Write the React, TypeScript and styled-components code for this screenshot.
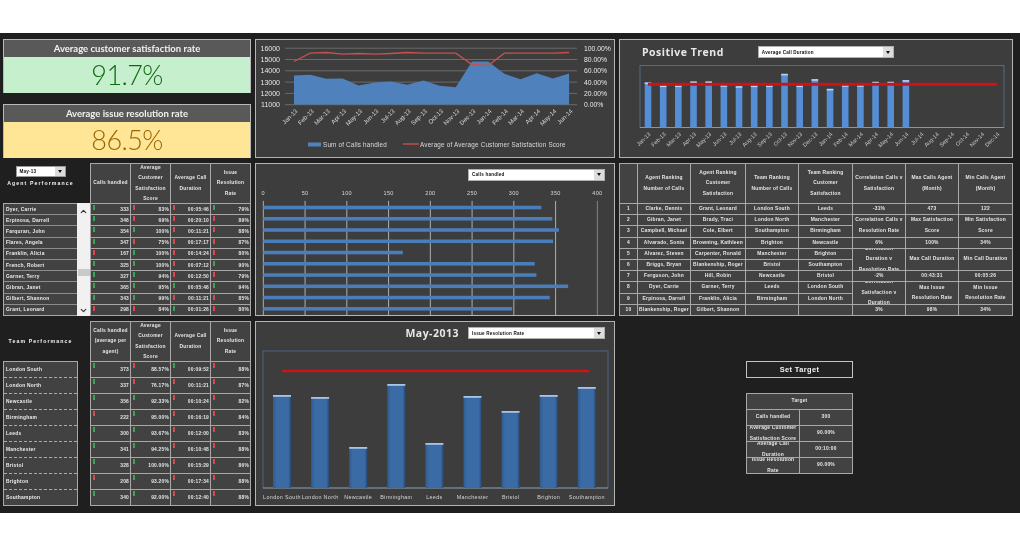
import styled, { createGlobalStyle } from "styled-components";
import { ChevronDown, ChevronUp } from "lucide-react";

const GlobalStyle = createGlobalStyle`
  html, body {
    margin: 0;
    padding: 0;
    background: #fff;
  }
  * {
    box-sizing: border-box;
  }
`;

const PANEL = "#3d3d3d";
const CELL = "#424242";
const LINE = "#a8a8a8";
const BLUE = "#4f81bd";
const MONTHS = ["Jan", "Feb", "Mar", "Apr", "May", "Jun", "Jul", "Aug", "Sep", "Oct", "Nov", "Dec"];

const Page = styled.div`
  width: 1020px;
  height: 544px;
  padding-top: 33px;
  background: #fff;
  overflow: hidden;
`;

const Dashboard = styled.main`
  height: 480px;
  padding: 6px 7px 0 3px;
  background: #1f1f1f;
  display: grid;
  grid-template-columns: 248px 360px 394px;
  grid-template-rows: 119px 153px 185px;
  column-gap: 4px;
  row-gap: 5px;
  filter: blur(0.3px);
  font-family: "Liberation Sans", Arial, sans-serif;
`;

const KpiStack = styled.section`
  display: flex;
  flex-direction: column;
  gap: 11px;
`;

const KpiCard = styled.div`
  flex: 1;
  display: flex;
  flex-direction: column;
  border: 1px solid #b8b8b8;
  border-bottom: none;
`;

const KpiTitle = styled.div`
  height: 17px;
  background: #595959;
  color: #f2f2f2;
  font: 700 9.5px/17px Lato, sans-serif;
  text-align: center;
`;

const KpiValue = styled.div<{ $bg: string; $fg: string }>`
  flex: 1;
  background: ${(p) => p.$bg};
  color: ${(p) => p.$fg};
  font: 300 27px/36px Lato, sans-serif;
  letter-spacing: -0.6px;
  text-align: center;
`;

const Panel = styled.section`
  background: ${PANEL};
  border: 1px solid #b4b4b4;
  display: flex;
  flex-direction: column;
  overflow: hidden;
`;

const Toolbar = styled.div<{ $height: number }>`
  height: ${(p) => p.$height}px;
  flex: none;
  display: flex;
  align-items: center;
  justify-content: flex-end;
  padding-right: 9px;
  gap: 9px;
`;

const TrendBar = styled(Toolbar)`
  justify-content: flex-start;
  padding: 3px 0 0 22px;
  gap: 34px;
`;

const ChartTitle = styled.h2`
  margin: 0;
  color: #e8e8e8;
  font: 700 10.5px "Open Sans", sans-serif;
  letter-spacing: 0.5px;
`;

const ChartSvg = styled.svg`
  display: block;
  flex: 1;
  min-height: 0;
  width: 100%;
  font-family: "Liberation Sans", Arial, sans-serif;
`;

const DropBox = styled.div<{ $width: number }>`
  width: ${(p) => p.$width}px;
  height: 12px;
  display: flex;
  align-items: center;
  background: #fff;
  border: 1px solid #b0b0b0;
  color: #111;
  font: 700 4.6px "Liberation Sans", sans-serif;
  letter-spacing: 0.2px;
  padding-left: 3px;
`;

const DropLabel = styled.span`
  flex: 1;
  white-space: nowrap;
`;

const DropArrow = styled.span`
  width: 10px;
  height: 100%;
  background: #dcdcdc;
  display: flex;
  align-items: center;
  justify-content: center;

  &::after {
    content: "";
    border-left: 2.5px solid transparent;
    border-right: 2.5px solid transparent;
    border-top: 3px solid #111;
  }
`;

function Dropdown({ label, width }: { label: string; width: number }) {
  return (
    <DropBox $width={width}>
      <DropLabel>{label}</DropLabel>
      <DropArrow />
    </DropBox>
  );
}

const TablePanel = styled.section`
  display: grid;
  grid-template-columns: 87px 161px;
`;

const SideColumn = styled.div`
  display: flex;
  flex-direction: column;
`;

const SideHead = styled.div`
  width: 75px;
  height: 40px;
  flex: none;
  display: flex;
  flex-direction: column;
  align-items: center;
  justify-content: flex-start;
  padding-top: 3px;
  gap: 3px;
`;

const TeamHead = styled(SideHead)`
  justify-content: center;
  padding-top: 0;
`;

const SideTitle = styled.h3`
  margin: 0;
  color: #f2f2f2;
  font: 700 5.2px "Liberation Sans", sans-serif;
  letter-spacing: 1.1px;
  white-space: nowrap;
`;

const MonthBox = styled(DropBox)`
  height: 11px;
  flex: none;
  border-color: #999;
`;

const ListRow = styled.div`
  flex: 1;
  display: flex;
  min-height: 0;
`;

const NameList = styled.div`
  width: 75px;
  display: flex;
  flex-direction: column;
  border: 1px solid ${LINE};
  background: ${CELL};
`;

const NameRow = styled.div<{ $dashed?: boolean }>`
  flex: 1;
  display: flex;
  align-items: center;
  padding-left: 2px;
  color: #ececec;
  font: 700 4.9px "Liberation Sans", sans-serif;
  letter-spacing: 0.25px;
  border-bottom: 1px ${(p) => (p.$dashed ? "dashed" : "solid")} ${(p) => (p.$dashed ? "#aaa" : "#8c8c8c")};
  white-space: nowrap;

  &:last-child {
    border-bottom: none;
  }
`;

const Scrollbar = styled.div`
  width: 13px;
  margin-left: -1px;
  position: relative;
  z-index: 1;
  display: flex;
  flex-direction: column;
  align-items: center;
  padding: 4px 0 1px;
  background: #f1f1f1;
  color: #333;

  svg:last-child {
    margin-top: auto;
  }
`;

const Thumb = styled.div`
  width: 12px;
  height: 7px;
  background: #c9c9c9;
  margin-top: 53px;
`;

const StatsGrid = styled.div<{ $rows: number }>`
  display: grid;
  grid-template-columns: repeat(4, 1fr);
  grid-template-rows: 39px repeat(${(p) => p.$rows}, 1fr);
  gap: 1px;
  padding: 1px;
  background: ${LINE};
  height: 100%;
`;

const HeadCell = styled.div`
  background: ${CELL};
  color: #e6e6e6;
  font: 700 4.9px/10.4px "Liberation Sans", sans-serif;
  letter-spacing: 0.22px;
  text-align: center;
  display: flex;
  align-items: center;
  justify-content: center;
  padding: 0 1px;
  overflow: hidden;
`;

const StatCell = styled.div`
  background: ${CELL};
  color: #e4e4e4;
  font: 700 4.9px "Liberation Sans", sans-serif;
  letter-spacing: 0.2px;
  display: flex;
  justify-content: space-between;
  align-items: center;
  padding-right: 1px;
  overflow: hidden;
  white-space: nowrap;
`;

const Flag = styled.i<{ $good: boolean }>`
  width: 2px;
  height: 5px;
  margin: 1px 0 0 2px;
  align-self: flex-start;
  background: ${(p) => (p.$good ? "#3aa655" : "#e0474c")};
`;

const RankGrid = styled.div`
  display: grid;
  grid-template-columns: 17px 52px 54px 52px 53px 52px 52px 53px;
  grid-template-rows: 39px repeat(10, 1fr);
  gap: 1px;
  padding: 1px;
  background: ${LINE};
`;

const RankCell = styled(HeadCell)<{ $span?: boolean }>`
  grid-row: ${(p) => (p.$span ? "span 2" : "auto")};
  white-space: ${(p) => (p.$span ? "normal" : "nowrap")};
`;

const TargetColumn = styled.section`
  grid-column: 3;
  padding: 40px 160px 0 127px;
  display: flex;
  flex-direction: column;
  gap: 15px;
`;

const SetTarget = styled.button`
  height: 17px;
  padding: 0;
  background: #222;
  border: 1px solid #c4c4c4;
  color: #f4f4f4;
  font: 700 7.4px "Liberation Sans", sans-serif;
  letter-spacing: 0.4px;
`;

const TargetGrid = styled.div`
  height: 81px;
  display: grid;
  grid-template-columns: 1fr 1fr;
  grid-template-rows: repeat(5, 1fr);
  gap: 1px;
  padding: 1px;
  background: ${LINE};
`;

const TargetHead = styled(HeadCell)`
  grid-column: span 2;
`;

const agents: [string, string, string, string, string, string][] = [
  ["Dyer, Carrie", "333", "83%", "00:05:46", "79%", "1001"],
  ["Erpinosa, Darrell", "346", "69%", "00:20:10", "89%", "1000"],
  ["Farquran, John", "354", "100%", "00:11:21", "88%", "1100"],
  ["Flares, Angela", "347", "75%", "00:17:17", "87%", "1000"],
  ["Franklin, Alicia", "167", "100%", "00:14:24", "80%", "0100"],
  ["French, Robert", "325", "100%", "00:07:12", "90%", "1101"],
  ["Garner, Terry", "327", "94%", "00:12:50", "79%", "1100"],
  ["Gibran, Janet", "365", "95%", "00:05:46", "94%", "1111"],
  ["Gilbert, Shannon", "343", "99%", "00:11:21", "85%", "1100"],
  ["Grant, Leonard", "298", "84%", "00:01:26", "80%", "0010"],
];

const teams: [string, string, string, string, string, string][] = [
  ["London South", "373", "88.57%", "00:09:52", "88%", "1010"],
  ["London North", "337", "76.17%", "00:11:21", "87%", "1000"],
  ["Newcastle", "356", "92.33%", "00:10:24", "82%", "1100"],
  ["Birmingham", "222", "95.00%", "00:16:19", "84%", "0100"],
  ["Leeds", "300", "93.67%", "00:12:00", "83%", "1100"],
  ["Manchester", "341", "94.25%", "00:10:48", "88%", "1100"],
  ["Bristol", "328", "100.00%", "00:15:29", "86%", "1100"],
  ["Brighton", "208", "93.20%", "00:17:34", "88%", "0100"],
  ["Southampton", "340", "92.00%", "00:12:40", "88%", "1100"],
];

const statHeads = ["Average Customer Satisfaction Score", "Average Call Duration", "Issue Resolution Rate"];

function StatsTable({ first, rows }: { first: string; rows: typeof agents }) {
  return (
    <StatsGrid $rows={rows.length}>
      <HeadCell>{first}</HeadCell>
      {statHeads.map((h) => (
        <HeadCell key={h}>{h}</HeadCell>
      ))}
      {rows.map((r) =>
        [1, 2, 3, 4].map((c) => (
          <StatCell key={r[0] + c}>
            <Flag $good={r[5][c - 1] === "1"} />
            {r[c]}
          </StatCell>
        )),
      )}
    </StatsGrid>
  );
}

const rankHead = [
  "",
  "Agent Ranking Number of Calls",
  "Agent Ranking Customer Satisfaction",
  "Team Ranking Number of Calls",
  "Team Ranking Customer Satisfaction",
  "Correlation Calls v Satisfaction",
  "Max Calls Agent (Month)",
  "Min Calls Agent (Month)",
];

const rankRows: string[][] = [
  ["1", "Clarke, Dennis", "Grant, Leonard", "London South", "Leeds", "-31%", "473", "122"],
  ["2", "Gibran, Janet", "Brady, Traci", "London North", "Manchester", "Correlation Calls v Resolution Rate", "Max Satisfaction Score", "Min Satisfaction Score"],
  ["3", "Campbell, Michael", "Cole, Elbert", "Southampton", "Birmingham"],
  ["4", "Alvarado, Sonia", "Browning, Kathleen", "Brighton", "Newcastle", "6%", "100%", "34%"],
  ["5", "Alvarez, Steven", "Carpenter, Ronald", "Manchester", "Brighton", "Correlation Duration v Resolution Rate", "Max Call Duration", "Min Call Duration"],
  ["6", "Briggs, Bryan", "Blankenship, Roger", "Bristol", "Southampton"],
  ["7", "Ferguson, John", "Hill, Robin", "Newcastle", "Bristol", "-2%", "00:43:31", "00:05:26"],
  ["8", "Dyer, Carrie", "Garner, Terry", "Leeds", "London South", "Correlation Satisfaction v Duration", "Max Issue Resolution Rate", "Min Issue Resolution Rate"],
  ["9", "Erpinosa, Darrell", "Franklin, Alicia", "Birmingham", "London North"],
  ["10", "Blankenship, Roger", "Gilbert, Shannon", "", "", "3%", "98%", "34%"],
];

function monthLabel(i: number) {
  return `${MONTHS[i % 12]}-${13 + Math.floor(i / 12)}`;
}

// chart coordinates below are page pixels, the viewBox shifts them into the panel
function CallsChart() {
  const x = (i: number) => 294 + i * 16.18;
  const y = (z: number) => 36 + z / 3;
  const area = [117, 115, 127, 126, 147, 138, 135, 145, 132, 148, 152, 75, 75, 112, 128, 110, 126, 111];
  const line = [75, 50, 48, 53, 51, 53, 51, 48, 50, 50, 50, 84, 87, 50, 50, 50, 50, 48];
  const left = ["16000", "15000", "14000", "13000", "12000", "11000"];
  const right = ["100.00%", "80.00%", "60.00%", "40.00%", "20.00%", "0.00%"];
  const areaPath = `M${x(0)} 104 ` + area.map((v, i) => `L${x(i)} ${y(v)}`).join(" ") + ` L${x(17)} 104 Z`;
  return (
    <ChartSvg viewBox="256 40 358 116">
      {left.map((t, i) => (
        <g key={t}>
          <line x1="285" x2="577" y1={47.7 + i * 11.3} y2={47.7 + i * 11.3} stroke="#777" strokeWidth="0.8" />
          <text x="280" y={50.2 + i * 11.3} fill="#e8e8e8" fontSize="7" textAnchor="end">{t}</text>
          <text x="584" y={50.2 + i * 11.3} fill="#e8e8e8" fontSize="6.8">{right[i]}</text>
        </g>
      ))}
      <path d={areaPath} fill={BLUE} />
      <polyline points={line.map((v, i) => `${x(i)},${y(v)}`).join(" ")} fill="none" stroke="#c8504f" strokeWidth="1.4" />
      {area.map((_, i) => (
        <text key={i} x={x(i) + 4} y="111" fill="#d8d8d8" fontSize="6.1" textAnchor="end" transform={`rotate(-45 ${x(i) + 4} 111)`}>
          {monthLabel(i)}
        </text>
      ))}
      <rect x="308" y="142" width="13" height="4" fill={BLUE} />
      <text x="323" y="146" fill="#dcdcdc" fontSize="6.3" letterSpacing="0.2">Sum of Calls handled</text>
      <line x1="403" x2="419" y1="143.5" y2="143.5" stroke="#c8504f" strokeWidth="1.4" />
      <text x="420" y="146" fill="#dcdcdc" fontSize="6.3" letterSpacing="0.2">Average of Average Customer Satisfaction Score</text>
    </ChartSvg>
  );
}

function TrendChart() {
  const tops = [138, 147, 147, 135, 135, 146, 149, 147, 147, 112, 147, 128, 157, 146, 146, 136, 136, 131];
  const x = (i: number) => 648 + i * 15.17;
  return (
    <ChartSvg viewBox="620 61 392 95">
      <rect x="640" y="65" width="364" height="62" fill="none" stroke="#5a7595" strokeWidth="0.8" />
      <line x1="640" x2="1004" y1="127" y2="127" stroke="#a0a0a0" strokeWidth="0.8" />
      {tops.map((z, i) => {
        const top = 36 + z / 3;
        return (
          <g key={i}>
            <rect x={x(i) - 3.3} y={top} width="6.6" height={127 - top} fill="#558ed5" />
            <rect x={x(i) - 3.3} y={top} width="6.6" height="1.6" fill="#b9d3f2" />
          </g>
        );
      })}
      <line x1="648" x2="997" y1="83.7" y2="83.7" stroke="#cc1418" strokeWidth="3" />
      {Array.from({ length: 24 }, (_, i) => (
        <text key={i} x={x(i) + 3} y="134" fill="#c8c8c8" fontSize="5.6" textAnchor="end" transform={`rotate(-45 ${x(i) + 3} 134)`}>
          {monthLabel(i)}
        </text>
      ))}
    </ChartSvg>
  );
}

function AgentBars() {
  const values = [333, 346, 354, 347, 167, 325, 327, 365, 343, 298];
  const ticks = [0, 50, 100, 150, 200, 250, 300, 350, 400];
  const x = (v: number) => 262 + v * 0.8415;
  return (
    <ChartSvg viewBox="256 184 358 131">
      {ticks.map((t) => (
        <g key={t}>
          <text x={x(t)} y="194" fill="#d8d8d8" fontSize="5.6" letterSpacing="0.3" textAnchor="middle">{t}</text>
          <line x1={x(t)} x2={x(t)} y1="200" y2="315" stroke={t === 400 ? "#8c8c8c" : "#bdbdbd"} strokeWidth="0.9" />
        </g>
      ))}
      {values.map((v, i) => (
        <rect key={i} x="262" y={204.9 + i * 11.34} width={v * 0.8415} height="3.6" fill="#4a7ebb" />
      ))}
    </ChartSvg>
  );
}

function TeamBars() {
  const tops = [394, 396, 446, 383, 442, 395, 410, 394, 386];
  const names = ["London South", "London North", "Newcastle", "Birmingham", "Leeds", "Manchester", "Bristol", "Brighton", "Southampton"];
  const x = (i: number) => 282 + i * 38.1;
  return (
    <ChartSvg viewBox="256 343 358 161">
      <defs>
        <linearGradient id="teamBar" x1="0" x2="1" y1="0" y2="0">
          <stop offset="0" stopColor="#2f5b8f" />
          <stop offset="0.2" stopColor="#3b6ba4" />
          <stop offset="0.85" stopColor="#3b6ba4" />
          <stop offset="1" stopColor="#264a75" />
        </linearGradient>
      </defs>
      <rect x="263" y="350" width="345" height="137" fill="none" stroke="#4f6f95" strokeWidth="0.8" />
      <line x1="263" x2="608" y1="487" y2="487" stroke="#a0a0a0" strokeWidth="0.8" />
      {tops.map((top, i) => (
        <g key={i}>
          <rect x={x(i) - 9} y={top} width="18" height={487 - top} fill="url(#teamBar)" />
          <rect x={x(i) - 9} y={top} width="18" height="1.8" fill="#a9c4e6" />
        </g>
      ))}
      <line x1="282" x2="589" y1="370" y2="370" stroke="#cc1418" strokeWidth="2.4" />
      {names.map((n, i) => (
        <text key={n} x={x(i)} y="498" fill="#d4d4d4" fontSize="5.4" letterSpacing="0.35" textAnchor="middle">{n}</text>
      ))}
    </ChartSvg>
  );
}

export default function App() {
  return (
    <Page>
      <GlobalStyle />
      <Dashboard>
        <KpiStack>
          <KpiCard>
            <KpiTitle>Average customer satisfaction rate</KpiTitle>
            <KpiValue $bg="#c6efce" $fg="#0f6b12">91.7%</KpiValue>
          </KpiCard>
          <KpiCard>
            <KpiTitle>Average issue resolution rate</KpiTitle>
            <KpiValue $bg="#ffe596" $fg="#9c6500">86.5%</KpiValue>
          </KpiCard>
        </KpiStack>

        <Panel>
          <CallsChart />
        </Panel>

        <Panel>
          <TrendBar $height={21}>
            <ChartTitle>Positive Trend</ChartTitle>
            <Dropdown label="Average Call Duration" width={136} />
          </TrendBar>
          <TrendChart />
        </Panel>

        <TablePanel>
          <SideColumn>
            <SideHead>
              <MonthBox $width={50}>
                <DropLabel>May-13</DropLabel>
                <DropArrow />
              </MonthBox>
              <SideTitle>Agent Performance</SideTitle>
            </SideHead>
            <ListRow>
              <NameList>
                {agents.map((a) => (
                  <NameRow key={a[0]}>{a[0]}</NameRow>
                ))}
              </NameList>
              <Scrollbar>
                <ChevronUp size={9} strokeWidth={3} />
                <Thumb />
                <ChevronDown size={9} strokeWidth={3} />
              </Scrollbar>
            </ListRow>
          </SideColumn>
          <StatsTable first="Calls handled" rows={agents} />
        </TablePanel>

        <Panel>
          <Toolbar $height={21}>
            <Dropdown label="Calls handled" width={137} />
          </Toolbar>
          <AgentBars />
        </Panel>

        <RankGrid>
          {rankHead.map((h, i) => (
            <HeadCell key={i}>{h}</HeadCell>
          ))}
          {rankRows.map((row) =>
            row.map((text, c) => (
              <RankCell key={row[0] + c} $span={row.length === 8 && c > 4 && text.length > 8}>
                {text}
              </RankCell>
            )),
          )}
        </RankGrid>

        <TablePanel>
          <SideColumn>
            <TeamHead>
              <SideTitle>Team Performance</SideTitle>
            </TeamHead>
            <ListRow>
              <NameList>
                {teams.map((t) => (
                  <NameRow key={t[0]} $dashed>{t[0]}</NameRow>
                ))}
              </NameList>
            </ListRow>
          </SideColumn>
          <StatsTable first="Calls handled (average per agent)" rows={teams} />
        </TablePanel>

        <Panel>
          <Toolbar $height={22}>
            <ChartTitle>May-2013</ChartTitle>
            <Dropdown label="Issue Resolution Rate" width={137} />
          </Toolbar>
          <TeamBars />
        </Panel>

        <TargetColumn>
          <SetTarget>Set Target</SetTarget>
          <TargetGrid>
            <TargetHead>Target</TargetHead>
            <HeadCell>Calls handled</HeadCell>
            <HeadCell>300</HeadCell>
            <HeadCell>Average Customer Satisfaction Score</HeadCell>
            <HeadCell>90.00%</HeadCell>
            <HeadCell>Average Call Duration</HeadCell>
            <HeadCell>00:10:00</HeadCell>
            <HeadCell>Issue Resolution Rate</HeadCell>
            <HeadCell>90.00%</HeadCell>
          </TargetGrid>
        </TargetColumn>
      </Dashboard>
    </Page>
  );
}
